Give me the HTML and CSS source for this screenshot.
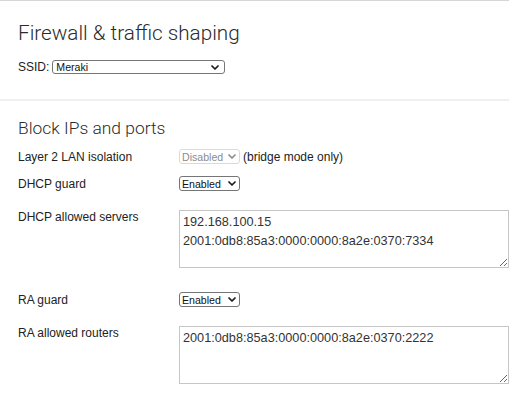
FILE: index.html
```html
<!DOCTYPE html>
<html lang="en">
<head>
    <meta charset="UTF-8">
    <meta name="viewport" content="width=device-width, initial-scale=1.0">
    <title>Firewall &amp; traffic shaping</title>
    <link rel="stylesheet" href="styles.css">
</head>
<body>
    <section class="head">
        <h1>Firewall &amp; traffic shaping</h1>
        <div class="ssid">
            <span>SSID:</span>
            <div class="select wide">
                <span>Meraki</span>
                <svg class="chev" width="8" height="5" viewBox="0 0 8 5"><path d="M1 1 L4 4 L7 1"/></svg>
            </div>
        </div>
    </section>

    <section class="block">
        <h2>Block IPs and ports</h2>
        <div class="rows">
            <div class="row">
                <div class="label">Layer 2 LAN isolation</div>
                <div class="field">
                    <div class="select off">
                        <span>Disabled</span>
                        <svg class="chev" width="8" height="5" viewBox="0 0 8 5"><path d="M1 1 L4 4 L7 1"/></svg>
                    </div>
                    <span>(bridge mode only)</span>
                </div>
            </div>
            <div class="row">
                <div class="label">DHCP guard</div>
                <div class="field">
                    <div class="select">
                        <span>Enabled</span>
                        <svg class="chev" width="8" height="5" viewBox="0 0 8 5"><path d="M1 1 L4 4 L7 1"/></svg>
                    </div>
                </div>
            </div>
            <div class="row text">
                <div class="label">DHCP allowed servers</div>
                <div class="field">
                    <textarea>192.168.100.15
2001:0db8:85a3:0000:0000:8a2e:0370:7334</textarea>
                </div>
            </div>
            <div class="row">
                <div class="label">RA guard</div>
                <div class="field">
                    <div class="select">
                        <span>Enabled</span>
                        <svg class="chev" width="8" height="5" viewBox="0 0 8 5"><path d="M1 1 L4 4 L7 1"/></svg>
                    </div>
                </div>
            </div>
            <div class="row text">
                <div class="label">RA allowed routers</div>
                <div class="field">
                    <textarea>2001:0db8:85a3:0000:0000:8a2e:0370:2222</textarea>
                </div>
            </div>
        </div>
    </section>
</body>
</html>
```

FILE: styles.css
```css
body {
    margin: 0;
    border-top: 1px solid #d6d6d6;
    background: #fff;
    color: #222;
    font-family: "Liberation Sans", Arial, sans-serif;
    font-size: 12px;
}
.head {
    padding: 20px 18px 25px;
    border-bottom: 2px solid #efefef;
}
h1 {
    margin: 0;
    font-family: Roboto, "Liberation Sans", sans-serif;
    font-weight: 300;
    font-size: 20.7px;
    line-height: 24px;
    color: #2b2b2b;
}
.ssid {
    display: flex;
    align-items: center;
    gap: 3px;
    margin-top: 15px;
    line-height: 14px;
}
.select {
    display: inline-flex;
    align-items: center;
    justify-content: space-between;
    box-sizing: border-box;
    width: 61px;
    height: 15px;
    padding: 0 3px 0 2px;
    border: 1px solid #767676;
    border-radius: 3px;
    background: #fff;
    font-size: 10.6px;
    color: #111;
}
.select.wide {
    width: 173px;
    height: 14px;
    padding-left: 3px;
    padding-right: 5px;
}
.select.off {
    border-color: #dadada;
    color: #8c8c8c;
}
.chev {
    flex: none;
}
.chev path {
    fill: none;
    stroke: #1a1a1a;
    stroke-width: 1.7;
    stroke-linecap: round;
    stroke-linejoin: round;
}
.select.off .chev path {
    stroke: #8c8c8c;
}
.block {
    padding: 17px 18px 0;
}
h2 {
    margin: 0;
    font-family: Roboto, "Liberation Sans", sans-serif;
    font-weight: 300;
    font-size: 17.4px;
    line-height: 20px;
    color: #2b2b2b;
}
.rows {
    margin-top: 11px;
}
.row {
    display: grid;
    grid-template-columns: 161px 1fr;
    align-items: center;
    line-height: 14px;
}
.row + .row {
    margin-top: 12px;
}
.row.text {
    align-items: start;
    margin-top: 19px;
}
.row.text + .row {
    margin-top: 24px;
}
.field {
    display: flex;
    align-items: center;
    gap: 3px;
}
textarea {
    display: block;
    box-sizing: border-box;
    width: 330px;
    height: 58px;
    margin: 0;
    padding: 2px 3px;
    border: 1px solid #c6c6c6;
    border-radius: 0;
    font-family: "Liberation Sans", Arial, sans-serif;
    font-size: 12.7px;
    line-height: 19px;
    color: #333;
    resize: vertical;
}
```
